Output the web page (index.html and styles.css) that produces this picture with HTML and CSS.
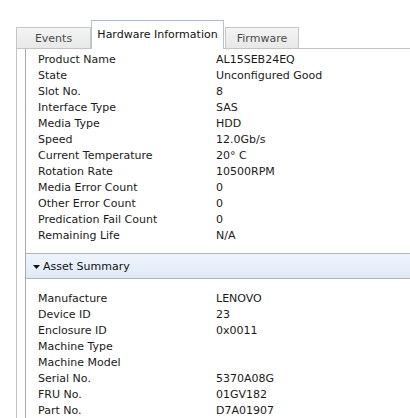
FILE: index.html
```html
<!DOCTYPE html>
<html>
<head>
<meta charset="utf-8">
<link rel="stylesheet" href="styles.css">
</head>
<body>
<div class="wrap">
  <div class="tabs">
    <div class="tab tab-events">Events</div>
    <div class="tab tab-active">Hardware Information</div>
    <div class="tab tab-firmware">Firmware</div>
  </div>
  <div class="panel">
    <div class="inner">
      <div class="rows rows-top">
        <div class="row"><span class="k">Product Name</span><span class="v">AL15SEB24EQ</span></div>
        <div class="row"><span class="k">State</span><span class="v">Unconfigured Good</span></div>
        <div class="row"><span class="k">Slot No.</span><span class="v">8</span></div>
        <div class="row"><span class="k">Interface Type</span><span class="v">SAS</span></div>
        <div class="row"><span class="k">Media Type</span><span class="v">HDD</span></div>
        <div class="row"><span class="k">Speed</span><span class="v">12.0Gb/s</span></div>
        <div class="row"><span class="k">Current Temperature</span><span class="v">20° C</span></div>
        <div class="row"><span class="k">Rotation Rate</span><span class="v">10500RPM</span></div>
        <div class="row"><span class="k">Media Error Count</span><span class="v">0</span></div>
        <div class="row"><span class="k">Other Error Count</span><span class="v">0</span></div>
        <div class="row"><span class="k">Predication Fail Count</span><span class="v">0</span></div>
        <div class="row"><span class="k">Remaining Life</span><span class="v">N/A</span></div>
      </div>
      <div class="section-head">
        <svg class="caret" width="7" height="4" viewBox="0 0 7 4"><path d="M0 0 H7 L3.5 4 Z" fill="#111"/></svg>
        <span>Asset Summary</span>
      </div>
      <div class="rows rows-bottom">
        <div class="row"><span class="k">Manufacture</span><span class="v">LENOVO</span></div>
        <div class="row"><span class="k">Device ID</span><span class="v">23</span></div>
        <div class="row"><span class="k">Enclosure ID</span><span class="v">0x0011</span></div>
        <div class="row"><span class="k">Machine Type</span><span class="v"></span></div>
        <div class="row"><span class="k">Machine Model</span><span class="v"></span></div>
        <div class="row"><span class="k">Serial No.</span><span class="v">5370A08G</span></div>
        <div class="row"><span class="k">FRU No.</span><span class="v">01GV182</span></div>
        <div class="row"><span class="k">Part No.</span><span class="v">D7A01907</span></div>
      </div>
    </div>
  </div>
</div>
</body>
</html>
```

FILE: styles.css
```css
html, body {
  margin: 0;
  padding: 0;
  background: #ffffff;
  height: 418px;
  overflow: hidden;
}
body {
  font-family: "DejaVu Sans", Verdana, sans-serif;
  font-size: 11px;
  color: #1a1a1a;
}
.wrap {
  padding: 20px 0 0 16px;
}
.tabs {
  display: flex;
  align-items: flex-end;
  height: 28px;
}
.tab {
  box-sizing: border-box;
  display: flex;
  align-items: center;
  justify-content: center;
  border: 1px solid #c6c6c6;
  border-bottom: none;
  white-space: nowrap;
}
.tab-events,
.tab-firmware {
  height: 21px;
  background: linear-gradient(#f4f4f4, #e8e8e8);
  color: #4a4a4a;
  padding-top: 1px;
}
.tab-events {
  width: 75px;
}
.tab-firmware {
  width: 74px;
  margin-left: 1px;
}
.tab-active {
  width: 133px;
  height: 29px;
  margin-bottom: -1px;
  background: #ffffff;
  border-color: #b9c3cf;
  border-top-color: #a9bcd4;
  color: #111;
  padding-bottom: 1px;
  position: relative;
  z-index: 1;
}
.panel {
  border-top: 1px solid #c3c3c3;
  border-left: 1px solid #c3c3c3;
  padding-left: 8px;
}
.inner {
  border-left: 1px solid #a9a9a9;
  min-height: 380px;
}
.rows {
  padding-left: 12px;
}
.rows-top {
  padding-top: 3px;
  padding-bottom: 9px;
}
.rows-bottom {
  padding-top: 12px;
}
.row {
  display: flex;
  height: 16px;
  line-height: 16px;
  white-space: nowrap;
}
.k {
  width: 178px;
  flex: none;
}
.v {
  flex: none;
}
.section-head {
  box-sizing: border-box;
  height: 26px;
  border-top: 1px solid #b4b4b4;
  border-bottom: 1px solid #b4b4b4;
  background: linear-gradient(#eef4fc, #dfe9f6);
  display: flex;
  align-items: center;
  padding-left: 7px;
  gap: 3px;
  color: #111;
}
.caret {
  display: block;
  margin-top: 1px;
}
```
